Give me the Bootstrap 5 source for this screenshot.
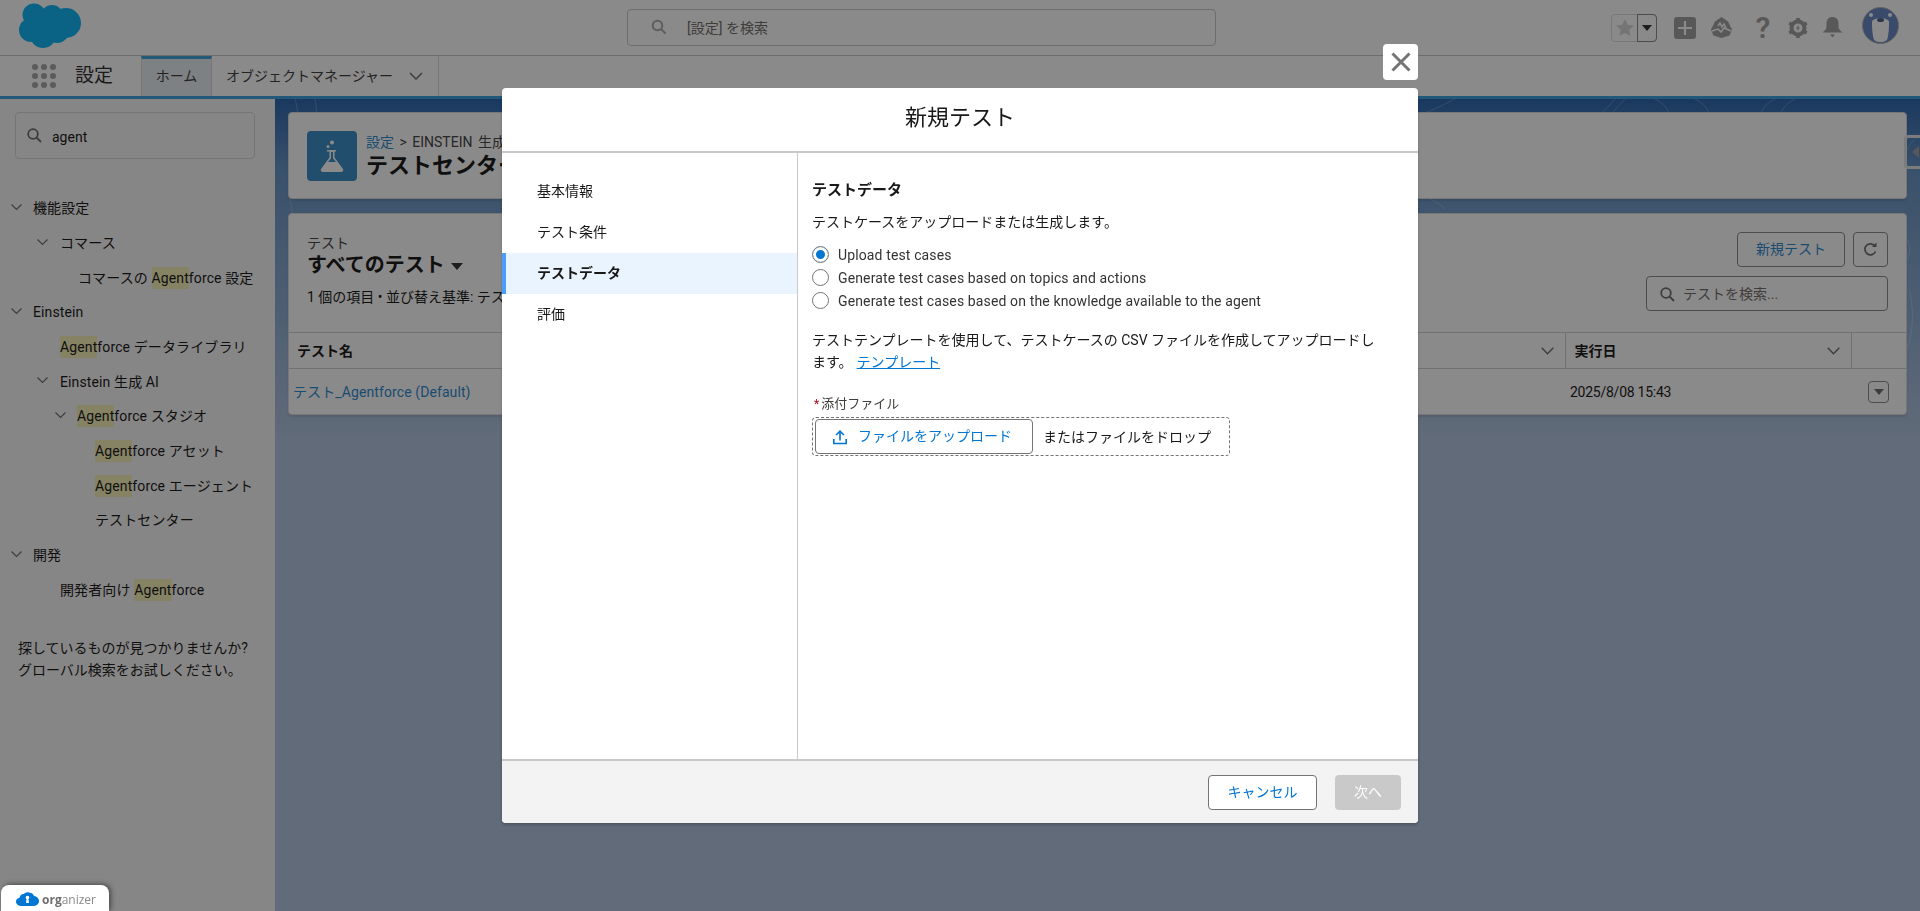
<!DOCTYPE html>
<html lang="ja">
<head>
<meta charset="utf-8">
<title>新規テスト</title>
<link rel="stylesheet" href="https://cdn.jsdelivr.net/npm/bootstrap@5.3.0/dist/css/bootstrap.min.css">
<style>
html,body{height:911px;overflow:hidden}
body{font-family:Roboto,"Noto Sans CJK JP",sans-serif;font-size:14px;color:#181818;background:#fff;line-height:22px}
.sf-top{height:56px;border-bottom:1px solid #c9c9c9;background:#fff;padding:0 21px 0 18px}
.sf-logo{width:64px;height:46px;margin-top:-6px}
.sf-gsearch{position:relative;width:589px;height:37px;margin:-1px 0 0 545px;border:1px solid #c9c9c9;border-radius:4px;background:#fff;color:#706e6b;padding:7px 0 0 59px}
.sf-gsearch svg{position:absolute;left:23px;top:9px}
.sf-right{margin-left:auto}
.sf-fav{width:46px;height:28px;border:1px solid #dcdcdc;border-radius:4px;margin-right:17px}
.sf-fav-a{width:26px}
.sf-fav-b{flex:1;border:1px solid #8a8a8a;border-radius:0 4px 4px 0;margin:-1px}
.sf-plus{width:22px;height:22px;background:#a0a0a0;border-radius:3px;margin-right:15px}
.sf-q{width:22px;font-size:30px;font-weight:600;color:#a0a0a0;text-align:center;margin:0 14px 0 20px;line-height:26px}
.sf-avatar{width:37px;height:37px;margin-left:19px;margin-top:-4px}
.sf-nav{height:43px;border-bottom:3px solid #3aa0e0;background:#fff}
.sf-dots{margin-left:32px;width:24px;display:grid;grid-template-columns:repeat(3,6px);gap:3px}
.sf-dots i{display:block;width:6px;height:6px;border-radius:50%;background:#a6a6a6}
.sf-app{font-size:19px;margin-left:19px;width:66px;color:#2e2e2e}
.sf-tab{height:40px;display:flex;align-items:center;font-size:14px;color:#3e3e3c}
.sf-tab-home{width:71px;justify-content:center;background:#e6eef3;border-top:3px solid #3ca4d8;border-left:1px solid #dddbda;border-right:1px solid #dddbda;padding-bottom:3px}
.sf-tab-obj{width:227px;padding-left:14px;border-right:1px solid #dddbda;gap:16px}
.sf-body{height:812px}
.sf-side{width:275px;background:#f7f7f7;flex:none;padding-top:13px}
.sf-sfind{position:relative;width:240px;height:47px;margin-left:15px;border:1px solid #d8d8d8;border-radius:4px;padding:13px 0 0 36px;margin-bottom:32px}
.sf-sfind svg{position:absolute;left:11px;top:15px}
.sf-tree{margin:0;padding:0;list-style:none;letter-spacing:.12px}
.sf-tree li{height:34.67px;display:flex;align-items:center;position:relative;white-space:nowrap}
.sf-tree svg{position:absolute;top:13px}
.sf-hl{background:#f5f2b8}
.sf-l0{padding-left:33px}.sf-l1{padding-left:60px}.sf-l2{padding-left:77px}.sf-l2b{padding-left:78px}.sf-l3{padding-left:95px}
.sf-l0 svg{left:11px}.sf-l1 svg{left:37px}.sf-l2 svg{left:55px}
.sf-help{margin:30px 0 0 18px}
.sf-main{flex:1;position:relative;overflow:hidden;background:linear-gradient(#2a66ae 0,#6494c4 70px,#b0c4df 340px);padding:13px}
.sf-topo{position:absolute;left:0;top:0;width:100%;height:330px}
.sf-card{position:relative;background:#fff;border-radius:4px;box-shadow:0 2px 2px rgba(0,0,0,.1);border:1px solid #dcdcdc}
.sf-ph{height:87px;padding:18px 18px;margin-bottom:14px;overflow:hidden}
.sf-flask{width:50px;height:50px;background:#3a8fc8;border-radius:4px;margin-right:9px}
.sf-crumb{font-size:14px;line-height:22px;height:20px;color:#444;word-spacing:2px}
.sf-crumb a,.sf-tlink,.sf-tlink:hover{color:#2b8ad0;text-decoration:none}
.sf-tlink{letter-spacing:.1px}
.sf-title{font-size:22px;font-weight:700;line-height:30px}
.sf-list{height:202px}
.sf-lhead{height:118px;padding:18px 18px 0 18px}
.sf-lname{font-size:20px;font-weight:700;line-height:26px}
.sf-caret{display:inline-block;width:0;height:0;border-left:5.5px solid transparent;border-right:5.5px solid transparent;border-top:6px solid #333;vertical-align:middle;margin-left:6px}
.sf-lname .sf-caret{border-left-width:6.5px;border-right-width:6.5px;border-top-width:7px}
.sf-btn{height:35px;border:1px solid #8a8a8a;border-radius:4px;background:#fff;color:#2b8ad0;padding:0;font-size:14px;line-height:33px}
.sf-find{position:relative;width:242px;height:35px;margin-top:9px;border:1px solid #8a8a8a;border-radius:4px;background:#fff;color:#706e6b;padding:6px 0 0 36px}
.sf-find svg{position:absolute;left:13px;top:10px}
.sf-table{table-layout:fixed;margin:0;width:100%}
.sf-table th,.sf-table td{padding:0;background:transparent;vertical-align:middle;box-shadow:none;color:#181818}
.sf-table th{height:36px;font-weight:700;border-top:1px solid #d0d0d0;border-bottom:1px solid #d0d0d0;position:relative}
.sf-table td{height:46px;border:0;font-weight:400}
.sf-table th svg{position:absolute;right:11px;top:14px}
.sf-div{border-right:1px solid #d0d0d0}
.sf-date{letter-spacing:-.25px}
.sf-mbtn{width:21px;height:22px;border:1px solid #8a8a8a;border-radius:4px;margin-left:17px;padding-top:7px;text-align:center;line-height:0}
.sf-mbtn .sf-caret{margin:0;border-top-color:#706e6b}
.sf-peek{position:absolute;right:0;top:36px;width:16px;height:34px;border:3px solid #e4e4e4;border-right:0;border-radius:4px 0 0 4px;display:flex;align-items:center;justify-content:flex-end}
.sf-peek i{display:block;width:0;height:0;border-top:6px solid transparent;border-bottom:6px solid transparent;border-right:7px solid #a0a0a0;margin-right:1px}
.sf-scrim{position:fixed;inset:0;background:rgba(8,7,7,.47);z-index:10}
.sf-modal{position:relative;width:916px;height:735px;border:0;border-radius:4px;box-shadow:0 2px 3px rgba(0,0,0,.2);background:#fff}
.sf-x{position:absolute;right:0;top:-44px;width:35px;height:36px;background:#fff;border:0;border-radius:4px;padding:0;display:flex;align-items:center;justify-content:center}
.sf-mh{height:65px;border-bottom:2px solid #c9c9c9;font-size:22px;line-height:60px;text-align:center;flex:none;padding:0;border-radius:4px 4px 0 0}
.sf-mb{flex:1;min-height:0}
.sf-steps{width:296px;flex:none;border-right:1px solid #c9c9c9;padding-top:18px;border-radius:0}
.sf-step{height:41px;border:0;border-left:4px solid transparent;border-radius:0!important;padding:0 0 2px 31px;display:flex;align-items:center;color:#181818;font-size:14px;background:transparent}
.sf-step-on{background:#eaf4fe;border-left-color:#4a9dfa;font-weight:700;color:#181818}
.sf-pane{flex:1;padding:26px 14px 0 14px}
.sf-h{font-weight:700;font-size:15px;line-height:22px;margin-bottom:10px}
.sf-lead{margin-bottom:10px}
.sf-radio{display:flex;align-items:center;height:23px;margin:0;padding:0;gap:9px;min-height:0;color:#333;letter-spacing:.13px}
.sf-radio .form-check-input{margin:0;width:17px;height:17px;border:1px solid #747474;float:none;background-image:none;position:relative;flex:none}
.sf-radio .form-check-input:checked{background:#fff;border-color:#747474;box-shadow:inset 0 0 0 3px #fff,inset 0 0 0 8px #0176d3}
.sf-para{margin:17px 0 21px;width:573px}
.sf-link,.sf-link:hover{color:#0176d3;text-decoration:underline;margin-left:4px}
.sf-lbl{line-height:20px;color:#3e3e3c;font-size:13px;padding-left:2px}
.sf-req{color:#ba0517;margin-right:2px;font-size:12px}
.sf-drop{width:418px;height:39px;border:1px dashed #747474;border-radius:4px;padding:2px;margin-top:3px;gap:10px}
.sf-up{width:218px;height:35px;border:1px solid #747474;border-radius:4px;color:#0176d3;background:#fff;padding:0 0 0 16px;gap:10px;font-size:14px}
.sf-mf{height:64px;background:#f3f3f3;border-top:2px solid #c9c9c9;flex:none;padding:0 17px 0 0;gap:18px;border-radius:0 0 4px 4px}
.sf-can{width:109px;height:35px;padding:0;border:1px solid #747474;background:#fff;color:#0176d3;border-radius:4px;font-size:14px}
.btn.sf-next,.btn.sf-next:disabled{width:66px;height:35px;padding:0;border:0;background:#c9c9c9;color:#fff;border-radius:4px;font-size:14px;opacity:1}
.sf-org{position:fixed;left:1px;bottom:0;width:108px;height:26px;background:#fff;border-radius:8px 8px 0 0;box-shadow:2px -1px 5px rgba(0,0,0,.45);z-index:20;padding:7px 0 0 15px;gap:3px;font-family:"Open Sans",sans-serif;font-size:12px;line-height:15px;color:#8a8a8a}
.sf-org b{color:#6e6e6e;font-weight:700}
</style>
</head>
<body>
<header class="sf-top d-flex align-items-center">
  <svg class="sf-logo" viewBox="0 0 64 46"><g fill="#0cb4f4"><circle cx="16" cy="13" r="11.5"/><circle cx="34" cy="14" r="11"/><circle cx="48" cy="21" r="15"/><circle cx="13" cy="28" r="12"/><circle cx="25" cy="33" r="13"/><circle cx="39" cy="29" r="12"/></g></svg>
  <div class="sf-gsearch"><svg width="16" height="16" viewBox="0 0 16 16" fill="none" stroke="#aaa" stroke-width="2"><circle cx="6.5" cy="6.5" r="4.8"/><path d="M10 10l4.5 4.5"/></svg>[設定] を検索</div>
  <div class="sf-right d-flex align-items-center">
    <div class="sf-fav d-flex">
      <div class="sf-fav-a d-flex align-items-center justify-content-center"><svg width="18" height="17" viewBox="0 0 18 17"><path d="M9 0l2.7 5.8 6.3.7-4.7 4.2 1.3 6.3L9 14l-5.6 3 1.3-6.3L0 6.500l6.300-.7z" fill="#d8d8d8"/></svg></div>
      <div class="sf-fav-b d-flex align-items-center justify-content-center"><span class="sf-caret m-0"></span></div>
    </div>
    <div class="sf-plus d-flex align-items-center justify-content-center"><svg width="14" height="14" viewBox="0 0 14 14"><path d="M7 0v14M0 7h14" stroke="#fff" stroke-width="2.200"/></svg></div>
    <svg width="21" height="21" viewBox="0 0 21 21"><path d="M10.500 0L17 4.500l4 8-2.500 6-8 2.500-8-2.500L0 12.500l4-8z" fill="#a0a0a0"/><path d="M1 14l6-2 3 3 3-4 7 3M7 9l2-3 2 4 2-3 2 4" fill="none" stroke="#fff" stroke-width="1.500"/></svg>
    <div class="sf-q">?</div>
    <svg width="20" height="20" viewBox="0 0 20 20"><circle cx="10" cy="10" r="6.500" fill="none" stroke="#a0a0a0" stroke-width="4"/><path d="M10 0v4M10 16v4M1.300 5l3.500 2M15.200 13l3.500 2M1.300 15l3.500-2M15.200 7l3.500-2" stroke="#a0a0a0" stroke-width="3.600"/><path d="M11 6.500L8 10.500h2l-1 3 3-4h-2z" fill="#a0a0a0"/></svg>
    <svg style="margin-left:14px" width="21" height="21" viewBox="0 0 21 21" fill="#a0a0a0"><path d="M10.500 0c3.800 0 6 2.700 6 6.500v4c0 2 2 3.200 4 5H.5c2-1.800 4-3 4-5v-4C4.500 2.700 6.700 0 10.500 0z"/><path d="M8 17.500h5l-2.500 3z"/></svg>
    <svg class="sf-avatar" viewBox="0 0 37 37"><circle cx="18.500" cy="18.500" r="18" fill="#6486c4" stroke="#b5b5b5"/><circle cx="9" cy="8" r="2" fill="#fff"/><circle cx="28" cy="8" r="2" fill="#fff"/><path d="M10 15c0-5 17-5 17 0 0 3 0 12-2 18-4 3-9 3-13 0-2-6-2-15-2-18z" fill="#fff"/><ellipse cx="18.500" cy="13" rx="3.500" ry="2" fill="#4a5f88"/></svg>
  </div>
</header>
<nav class="sf-nav d-flex align-items-center">
  <div class="sf-dots"><i></i><i></i><i></i><i></i><i></i><i></i><i></i><i></i><i></i></div>
  <div class="sf-app">設定</div>
  <div class="sf-tab sf-tab-home">ホーム</div>
  <div class="sf-tab sf-tab-obj">オブジェクトマネージャー<svg width="14" height="8" viewBox="0 0 14 8" fill="none" stroke="#706e6b" stroke-width="1.500"><path d="M1 1l6 6 6-6"/></svg></div>
</nav>
<div class="sf-body d-flex">
  <aside class="sf-side">
    <div class="sf-sfind"><svg width="15" height="15" viewBox="0 0 15 15" fill="none" stroke="#706e6b" stroke-width="1.800"><circle cx="6" cy="6" r="4.800"/><path d="M9.500 9.500l4.500 4.500"/></svg>agent</div>
    <ul class="sf-tree">
      <li class="sf-l0"><svg width="11" height="7" viewBox="0 0 11 7" fill="none" stroke="#706e6b" stroke-width="1.200"><path d="M.5.500l5 5 5-5"/></svg>機能設定</li>
      <li class="sf-l1"><svg width="11" height="7" viewBox="0 0 11 7" fill="none" stroke="#706e6b" stroke-width="1.200"><path d="M.5.500l5 5 5-5"/></svg>コマース</li>
      <li class="sf-l2b">コマースの&nbsp;<span class="sf-hl">Agent</span>force 設定</li>
      <li class="sf-l0"><svg width="11" height="7" viewBox="0 0 11 7" fill="none" stroke="#706e6b" stroke-width="1.200"><path d="M.5.500l5 5 5-5"/></svg>Einstein</li>
      <li class="sf-l1"><span class="sf-hl">Agent</span>force データライブラリ</li>
      <li class="sf-l1"><svg width="11" height="7" viewBox="0 0 11 7" fill="none" stroke="#706e6b" stroke-width="1.200"><path d="M.5.500l5 5 5-5"/></svg>Einstein 生成 AI</li>
      <li class="sf-l2"><svg width="11" height="7" viewBox="0 0 11 7" fill="none" stroke="#706e6b" stroke-width="1.200"><path d="M.5.500l5 5 5-5"/></svg><span class="sf-hl">Agent</span>force スタジオ</li>
      <li class="sf-l3"><span class="sf-hl">Agent</span>force アセット</li>
      <li class="sf-l3"><span class="sf-hl">Agent</span>force エージェント</li>
      <li class="sf-l3">テストセンター</li>
      <li class="sf-l0"><svg width="11" height="7" viewBox="0 0 11 7" fill="none" stroke="#706e6b" stroke-width="1.200"><path d="M.5.500l5 5 5-5"/></svg>開発</li>
      <li class="sf-l1">開発者向け&nbsp;<span class="sf-hl">Agent</span>force</li>
    </ul>
    <p class="sf-help">探しているものが見つかりませんか?<br>グローバル検索をお試しください。</p>
  </aside>
  <main class="sf-main">
    <svg class="sf-topo" viewBox="0 0 1645 330" preserveAspectRatio="none" fill="none" stroke="#fff" stroke-opacity=".22">
      <path d="M20 0c10 30-10 60-5 100s30 60 0 110M40 0c5 20-5 50 0 80M1000 0c-20 10-30 12-40 14M1180 0c-20 10-25 12-30 14M1340 0l-12 13M1350 0l-12 13M1380 0c10 5 12 10 14 14M1420 0c10 5 12 10 14 14M1500 0c-10 5-12 10-14 14M1520 0c-10 5-12 10-14 14M1640 40c-10 10-14 20-14 40M1634 190c5 20 5 40-2 60M340 150c20-18 70-18 90 0M1040 100c20-12 60-12 80 0M1080 110c30-25 60-25 90 0M60 120c-20 10-40 30-20 60M1620 130c20 10 20 30 0 40"/>
    </svg>
    <section class="sf-card sf-ph d-flex">
      <div class="sf-flask d-flex align-items-center justify-content-center flex-none"><svg width="24" height="32" viewBox="0 0 24 32" fill="#fff"><circle cx="12" cy="2.500" r="2"/><circle cx="8" cy="6.500" r="1.500"/><path d="M7 10h9v1.500h-1.500v6L23 29c.7 1.300 0 3-2 3H3c-2 0-2.700-1.700-2-3l8.500-11.500v-6H7zm4 2v6.200L8 22h8l-3-3.800V12z" fill-rule="evenodd"/></svg></div>
      <div class="flex-grow-1 text-nowrap">
        <div class="sf-crumb"><a href="#">設定</a> &gt; EINSTEIN 生成 AI</div>
        <div class="sf-title">テストセンター</div>
      </div>
    </section>
    <section class="sf-card sf-list">
      <div class="sf-lhead d-flex justify-content-between">
        <div>
          <div class="sf-crumb">テスト</div>
          <div class="sf-lname">すべてのテスト<span class="sf-caret"></span></div>
          <div class="mt-2">1 個の項目 • 並び替え基準: テスト名</div>
        </div>
        <div class="d-flex flex-column align-items-end">
          <div class="d-flex gap-2">
            <button class="btn sf-btn" style="width:108px">新規テスト</button>
            <button class="btn sf-btn d-flex align-items-center justify-content-center" style="width:35px"><svg width="15" height="15" viewBox="0 0 15 15" fill="none" stroke="#706e6b" stroke-width="1.700"><path d="M12.500 9.500a5.500 5.500 0 1 1-.3-5"/><path d="M13.500 0.500v4.500H9" fill="#706e6b" stroke="none"/></svg></button>
          </div>
          <div class="sf-find"><svg width="15" height="15" viewBox="0 0 15 15" fill="none" stroke="#706e6b" stroke-width="1.800"><circle cx="6" cy="6" r="4.800"/><path d="M9.500 9.500l4.500 4.500"/></svg>テストを検索...</div>
        </div>
      </div>
      <table class="table sf-table">
        <colgroup><col style="width:1276px"><col style="width:286px"><col></colgroup>
        <thead><tr>
          <th class="sf-div ps-2">テスト名<svg width="13" height="8" viewBox="0 0 13 8" fill="none" stroke="#706e6b" stroke-width="1.400"><path d="M.7.700l5.800 6 5.800-6"/></svg></th>
          <th class="sf-div" style="padding-left:9px">実行日<svg width="13" height="8" viewBox="0 0 13 8" fill="none" stroke="#706e6b" stroke-width="1.400"><path d="M.7.700l5.800 6 5.800-6"/></svg></th>
          <th></th>
        </tr></thead>
        <tbody><tr>
          <td style="padding-left:4px"><a class="sf-tlink" href="#">テスト_Agentforce (Default)</a></td>
          <td class="sf-date" style="padding-left:5px">2025/8/08 15:43</td>
          <td><div class="sf-mbtn"><span class="sf-caret"></span></div></td>
        </tr></tbody>
      </table>
    </section>
    <div class="sf-peek"><i></i></div>
  </main>
</div>

<div class="sf-scrim d-flex align-items-center justify-content-center">
  <div class="modal-content sf-modal d-flex flex-column">
    <button class="sf-x" aria-label="閉じる"><svg width="20" height="20" viewBox="0 0 20 20" stroke="#747474" stroke-width="3"><path d="M1.500 1.500l17 17M18.500 1.500l-17 17"/></svg></button>
    <div class="sf-mh">新規テスト</div>
    <div class="sf-mb d-flex">
      <div class="list-group sf-steps">
        <a href="#" class="list-group-item sf-step">基本情報</a>
        <a href="#" class="list-group-item sf-step">テスト条件</a>
        <a href="#" class="list-group-item sf-step sf-step-on">テストデータ</a>
        <a href="#" class="list-group-item sf-step">評価</a>
      </div>
      <div class="sf-pane">
        <div class="sf-h">テストデータ</div>
        <div class="sf-lead">テストケースをアップロードまたは生成します。</div>
        <label class="form-check sf-radio"><input class="form-check-input" type="radio" name="kind" checked>Upload test cases</label>
        <label class="form-check sf-radio"><input class="form-check-input" type="radio" name="kind">Generate test cases based on topics and actions</label>
        <label class="form-check sf-radio"><input class="form-check-input" type="radio" name="kind">Generate test cases based on the knowledge available to the agent</label>
        <p class="sf-para">テストテンプレートを使用して、テストケースの CSV ファイルを作成してアップロードします。<a class="sf-link" href="#">テンプレート</a></p>
        <div class="sf-lbl"><span class="sf-req">*</span>添付ファイル</div>
        <div class="sf-drop d-flex align-items-center">
          <button class="btn sf-up d-flex align-items-center"><svg width="16" height="16" viewBox="0 0 16 16" fill="#0176d3"><path d="M8 1l4.500 4.500-1.100 1L8.800 4v7.500H7.200V4L4.600 6.500l-1.100-1zM1 10h1.600v3.700h10.800V10H15v5.300H1z"/></svg>ファイルをアップロード</button>
          <span>またはファイルをドロップ</span>
        </div>
      </div>
    </div>
    <div class="sf-mf d-flex align-items-center justify-content-end">
      <button class="btn sf-can">キャンセル</button>
      <button class="btn sf-next" disabled>次へ</button>
    </div>
  </div>
</div>
<div class="sf-org d-flex align-items-start">
  <svg width="23" height="14" viewBox="0 0 23 14"><path d="M6 14C2 14 0 12 0 9.500 0 7.300 1.500 6 3.500 5.700 4 3 6 1.500 8 2c1-1.400 3.500-2.300 5.500-1.200 1.800-.3 4 1 4.500 3.200 2.800.4 5 2.500 5 5s-2 5-6 5z" fill="#0176d3"/><circle cx="11.500" cy="5.500" r="1.800" fill="#fff"/><path d="M10.600 6h1.800l.5 5h-2.800z" fill="#fff"/></svg>
  <span><b>org</b>anizer</span>
</div>
<script src="https://cdn.jsdelivr.net/npm/bootstrap@5.3.0/dist/js/bootstrap.bundle.min.js"></script>
</body>
</html>
